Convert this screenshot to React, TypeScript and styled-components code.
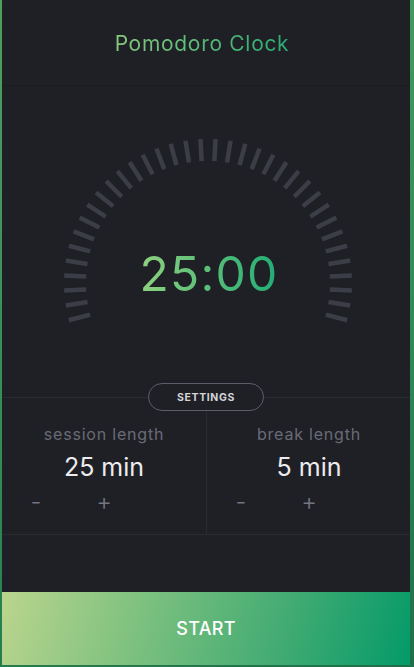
import React from "react";
import styled, { createGlobalStyle } from "styled-components";

const GlobalStyle = createGlobalStyle`
  html, body {
    margin: 0;
    padding: 0;
    height: 100%;
  }
  body {
    background: linear-gradient(160deg, #4f9f5e 0%, #2f8a55 60%, #1f7048 100%);
    font-family: Inter, "Noto Sans", sans-serif;
    overflow: hidden;
  }
  #root {
    height: 100%;
  }
`;

const Card = styled.div`
  margin: 0 4px 0 2px;
  height: 665px;
  background: #1f2025;
  display: flex;
  flex-direction: column;
  box-sizing: border-box;
`;

const Header = styled.header`
  height: 85px;
  flex: 0 0 85px;
  border-bottom: 1px solid #1a1b1f;
  display: flex;
  align-items: center;
  justify-content: center;
`;

const GradientText = styled.span`
  background: linear-gradient(90deg, #86c97d 0%, #2bab73 100%);
  -webkit-background-clip: text;
  background-clip: text;
  color: transparent;
`;

const Title = styled(GradientText)`
  font-size: 21px;
  letter-spacing: 0.7px;
  font-weight: 400;
  margin-top: 1px;
  margin-right: 8px;
`;

const DialSection = styled.section`
  flex: 0 0 311px;
  display: grid;
  justify-items: center;
`;

const DialSvg = styled.svg`
  grid-area: 1 / 1;
  display: block;
`;

const Time = styled(GradientText)`
  grid-area: 1 / 1;
  align-self: start;
  margin-top: 164px;
  margin-left: 6px;
  font-size: 48px;
  line-height: 48px;
  font-weight: 400;
  letter-spacing: 1.2px;
  background: linear-gradient(90deg, #8ed17e 0%, #22ad74 100%);
  -webkit-background-clip: text;
  background-clip: text;
`;

const SettingsArea = styled.div`
  position: relative;
  border-top: 1px solid #2a2b31;
  border-bottom: 1px solid #2a2b31;
  display: grid;
  grid-template-columns: 1fr 1fr;
  height: 138px;
  box-sizing: border-box;
`;

const SettingsButton = styled.button`
  position: absolute;
  top: -15px;
  left: 50%;
  transform: translateX(-50%);
  width: 116px;
  height: 28px;
  border-radius: 14px;
  border: 1.5px solid #5b5d68;
  background: #1f2025;
  color: #d4d5da;
  font-family: Inter, "Noto Sans", sans-serif;
  font-size: 10.5px;
  font-weight: 700;
  letter-spacing: 0.6px;
  padding: 0;
  box-sizing: border-box;
`;

const Column = styled.div<{ $divider?: boolean }>`
  display: flex;
  flex-direction: column;
  align-items: center;
  padding-top: 26px;
  border-right: ${(p) => (p.$divider ? "1px solid #2a2b31" : "none")};
`;

const Label = styled.div`
  font-size: 16px;
  line-height: 20px;
  color: #696b77;
  letter-spacing: 0.8px;
`;

const Value = styled.div`
  margin-top: 8px;
  font-size: 25px;
  line-height: 30px;
  color: #ececee;
`;

const Controls = styled.div`
  margin-top: 6px;
  display: grid;
  grid-template-columns: repeat(3, 68px);
  justify-items: center;
`;

const Adjust = styled.button`
  background: none;
  border: none;
  padding: 0;
  font-family: Inter, "Noto Sans", sans-serif;
  font-size: 24px;
  line-height: 28px;
  font-weight: 300;
  color: #747783;
`;

const Spacer = styled.div`
  flex: 1;
`;

const StartButton = styled.button`
  flex: 0 0 73px;
  height: 73px;
  border: none;
  background: linear-gradient(105deg, #bad58d 0%, #7bc07f 35%, #3faa72 70%, #049a69 100%);
  color: #ffffff;
  font-family: Inter, "Noto Sans", sans-serif;
  font-size: 18px;
  font-weight: 500;
  letter-spacing: 0.3px;
  padding: 0;
`;

const CX = 206;
const CY = 197;
const R_OUT = 144;
const R_IN = 122;

const ticks = Array.from({ length: 36 }, (_, i) => -105 + i * 6);

function Dial() {
  return (
    <DialSvg width={408} height={311} viewBox="0 0 408 311">
      {ticks.map((deg) => {
        const a = (deg * Math.PI) / 180;
        const s = Math.sin(a);
        const c = Math.cos(a);
        return (
          <line
            key={deg}
            x1={CX + R_IN * s}
            y1={CY - R_IN * c}
            x2={CX + R_OUT * s}
            y2={CY - R_OUT * c}
            stroke="#3c3e47"
            strokeWidth={4.5}
          />
        );
      })}
    </DialSvg>
  );
}

export default function App() {
  return (
    <>
      <GlobalStyle />
      <Card>
        <Header>
          <Title>Pomodoro Clock</Title>
        </Header>
        <DialSection>
          <Dial />
          <Time>25:00</Time>
        </DialSection>
        <SettingsArea>
          <SettingsButton>SETTINGS</SettingsButton>
          <Column $divider>
            <Label>session length</Label>
            <Value>25 min</Value>
            <Controls>
              <Adjust>-</Adjust>
              <Adjust>+</Adjust>
            </Controls>
          </Column>
          <Column>
            <Label>break length</Label>
            <Value>5 min</Value>
            <Controls>
              <Adjust>-</Adjust>
              <Adjust>+</Adjust>
            </Controls>
          </Column>
        </SettingsArea>
        <Spacer />
        <StartButton>START</StartButton>
      </Card>
    </>
  );
}
